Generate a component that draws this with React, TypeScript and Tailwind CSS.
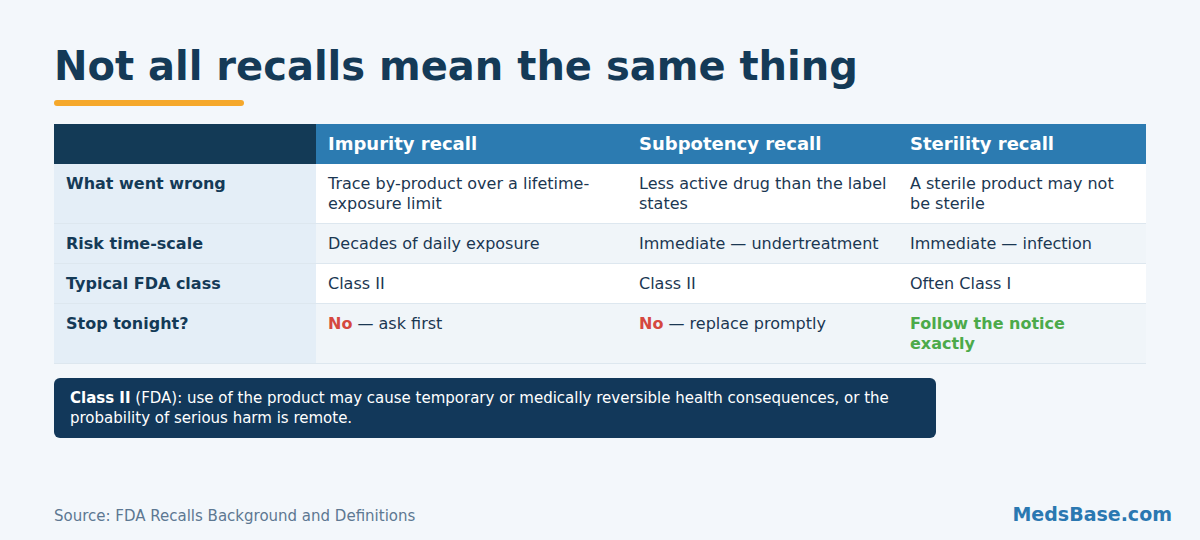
import React from 'react';

const rows = [
  {
    label: 'What went wrong',
    cells: [
      <>Trace by-product over a lifetime-exposure limit</>,
      <>Less active drug than the label states</>,
      <>A sterile product may not be sterile</>,
    ],
    alt: false,
  },
  {
    label: 'Risk time-scale',
    cells: [<>Decades of daily exposure</>, <>Immediate — undertreatment</>, <>Immediate — infection</>],
    alt: true,
  },
  {
    label: 'Typical FDA class',
    cells: [<>Class II</>, <>Class II</>, <>Often Class I</>],
    alt: false,
  },
  {
    label: 'Stop tonight?',
    cells: [
      <>
        <span className="font-bold text-[#d5483f]">No</span> — ask first
      </>,
      <>
        <span className="font-bold text-[#d5483f]">No</span> — replace promptly
      </>,
      <span className="font-bold text-[#4caa4a]">Follow the notice exactly</span>,
    ],
    alt: true,
  },
];

// the middle column sits a little tighter on its right edge
const cellPad = ['pl-3 pr-3', 'pl-3 pr-1', 'pl-3 pr-3'];

const App: React.FC = () => {
  return (
    <div className="w-[1200px] h-[540px] bg-[#f3f7fb] px-[54px] flex flex-col font-['DejaVu_Sans',sans-serif] text-[#1b3752] overflow-hidden">
      {/* Title */}
      <h1 className="mt-[42px] text-[40px] leading-[48px] font-bold text-[#143a57]">
        Not all recalls mean the same thing
      </h1>
      <div className="mt-[10px] w-[190px] h-[6px] rounded-full bg-[#f5a82b]" />

      {/* Comparison table */}
      <table className="mt-[18px] w-[1092px] table-fixed border-collapse text-[16px] leading-5">
        <colgroup>
          <col className="w-[262px]" />
          <col className="w-[311px]" />
          <col className="w-[271px]" />
          <col className="w-[248px]" />
        </colgroup>
        <thead>
          <tr className="text-white text-[18px] font-bold">
            <th className="bg-[#133a56] h-[40px]" />
            <th className="bg-[#2c7bb1] px-3 text-left">Impurity recall</th>
            <th className="bg-[#2c7bb1] px-3 text-left">Subpotency recall</th>
            <th className="bg-[#2c7bb1] px-3 text-left">Sterility recall</th>
          </tr>
        </thead>
        <tbody>
          {rows.map((row, i) => (
            <tr key={i} className="border-b border-[#dde7ef]">
              <td className="bg-[#e4eef7] px-3 pt-[10px] pb-[9px] align-top font-bold text-[#143a57]">
                {row.label}
              </td>
              {row.cells.map((cell, j) => (
                <td
                  key={j}
                  className={`${row.alt ? 'bg-[#f0f5f9]' : 'bg-white'} ${cellPad[j]} pt-[10px] pb-[9px] align-top`}
                >
                  {cell}
                </td>
              ))}
            </tr>
          ))}
        </tbody>
      </table>

      {/* Callout */}
      <div className="mt-[14px] w-[882px] rounded-md bg-[#12385a] px-4 py-[10px] text-[15px] leading-5 text-white">
        <span className="font-bold">Class II</span> (FDA): use of the product may cause temporary or medically
        reversible health consequences, or the probability of serious harm is remote.
      </div>

      {/* Footer */}
      <div className="mt-auto mb-[10px] mr-[-26px] flex items-center justify-between">
        <p className="text-[15px] leading-5 text-[#5d7892]">Source: FDA Recalls Background and Definitions</p>
        <p className="mb-[4px] text-[19px] leading-6 font-bold text-[#2a78b1]">MedsBase.com</p>
      </div>
    </div>
  );
};

export default App;
